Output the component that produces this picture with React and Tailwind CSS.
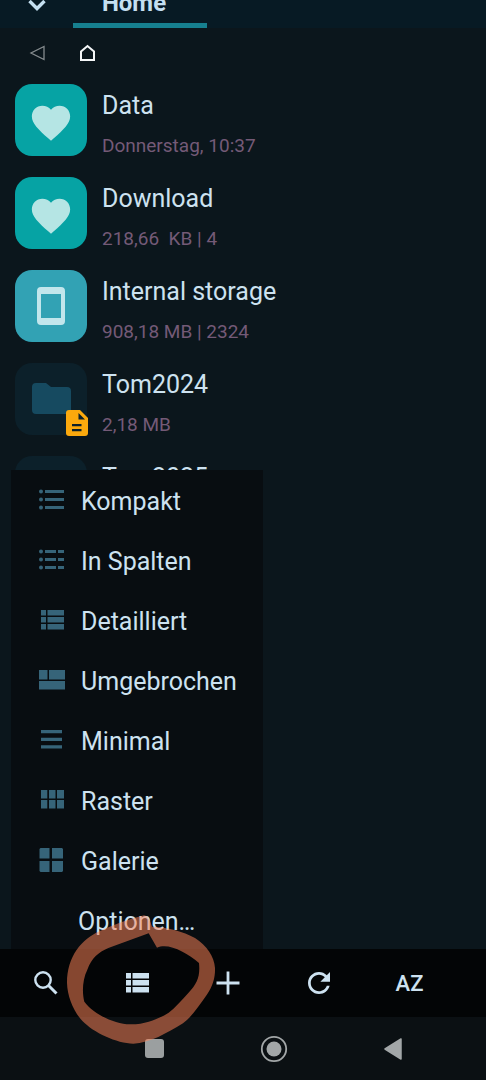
const entries = [
    { name: "Data", info: "Donnerstag, 10:37", type: "heart" },
    { name: "Download", info: "218,66  KB | 4", type: "heart" },
    { name: "Internal storage", info: "908,18 MB | 2324", type: "phone" },
    { name: "Tom2024", info: "2,18 MB", type: "folder", badge: true },
    { name: "Tom2025", info: "", type: "folder" },
];

const tileColors = {
    heart: "bg-[#06a3a4]",
    phone: "bg-[#32a2b4]",
    folder: "bg-[#0c202a]",
};

const tileIcons = {
    heart: (
        <svg viewBox="0 -1.500 24 24" className="size-[46px] fill-[#b5e5e4]">
            <path d="M12 21.350l-1.450-1.320C5.400 15.360 2 12.280 2 8.500 2 5.420 4.420 3 7.500 3c1.740 0 3.410.81 4.500 2.090C13.090 3.810 14.760 3 16.500 3 19.580 3 22 5.420 22 8.500c0 3.780-3.400 6.860-8.550 11.540z" />
        </svg>
    ),
    phone: (
        <svg viewBox="0 0 28 38" className="h-[38px] w-[28px]">
            <path fillRule="evenodd" fill="#c2e6ec" d="M4 0H24Q28 0 28 4V34Q28 38 24 38H4Q0 38 0 34V4Q0 0 4 0ZM4 7V31H24V7Z" />
        </svg>
    ),
    folder: (
        <svg viewBox="0 0 40 32" className="h-[32px] w-[40px] fill-[#164a60]">
            <path d="M5 0H15L20 4H36Q40 4 40 8V27Q40 31 36 31H5Q1 31 1 27V4Q1 0 5 0Z" />
        </svg>
    ),
};

const viewModes = [
    {
        label: "Kompakt",
        d: "M7 4H26V7H7ZM7 12H26V15H7ZM7 20H26V23H7ZM1 5.5a2 2 0 1 0 4 0a2 2 0 1 0-4 0ZM1 13.5a2 2 0 1 0 4 0a2 2 0 1 0-4 0ZM1 21.5a2 2 0 1 0 4 0a2 2 0 1 0-4 0Z",
    },
    {
        label: "In Spalten",
        d: "M7 4H18V7H7ZM20 4H26V7H20ZM7 12H18V15H7ZM20 12H26V15H20ZM7 20H18V23H7ZM20 20H26V23H20ZM1 5.5a2 2 0 1 0 4 0a2 2 0 1 0-4 0ZM1 13.5a2 2 0 1 0 4 0a2 2 0 1 0-4 0ZM1 21.5a2 2 0 1 0 4 0a2 2 0 1 0-4 0Z",
    },
    {
        label: "Detailliert",
        d: "M3 4H8V9.5H3ZM9.5 4H26V9.5H9.5ZM3 11H8V16.5H3ZM9.5 11H26V16.5H9.5ZM3 18H8V23.5H3ZM9.5 18H26V23.5H9.5Z",
    },
    { label: "Umgebrochen", d: "M1 4H9.5V13.5H1ZM11 4H27V13.5H11ZM1 15H27V23.5H1Z" },
    { label: "Minimal", d: "M3 4H24V7.3H3ZM3 11.7H24V15H3ZM3 19.3H24V22.6H3Z" },
    {
        label: "Raster",
        d: "M3 4H9.3V12.5H3ZM11 4H17.5V12.5H11ZM19 4H26V12.5H19ZM3 14H9.3V22.5H3ZM11 14H17.5V22.5H11ZM19 14H26V22.5H19Z",
    },
    {
        label: "Galerie",
        d: "M2.5 2H11.5V12.5H1.5V3ZM14 2H24L25 3V12.5H14ZM1.5 15H11.5V26H2.5L1.5 25ZM14 15H25V25L24 26H14Z",
    },
];

const Header = () => {
    return (
        <header className="flex h-7 shrink-0 items-end overflow-hidden bg-[#071a24]">
            <button aria-label="Mehr" className="flex w-[73px] justify-center pb-[17px]">
                <svg viewBox="0 0 18 12" className="h-3 w-[18px]">
                    <path d="M1.500 2L9 9.500L16.500 2" fill="none" stroke="#c4dff0" strokeWidth="3.400" />
                </svg>
            </button>
            <button className="w-[134px] border-b-[5px] border-[#16808f] pr-3 pb-1 text-2xl leading-8 font-bold text-[#c4dff0]">
                Home
            </button>
        </header>
    );
};

const Breadcrumb = () => {
    return (
        <nav className="flex h-14 shrink-0 items-center gap-[33px] pb-1.5 pl-[29px]">
            <button aria-label="Zurück">
                <svg viewBox="0 0 17 18" className="h-[18px] w-[17px]">
                    <path d="M15 2.500V15.500L2 9Z" fill="none" stroke="#858b8e" strokeWidth="1.300" />
                </svg>
            </button>
            <button aria-label="Home">
                <svg viewBox="0 0 17 18" className="h-[18px] w-[17px]">
                    <path d="M2 7.500L8.500 2L15 7.500V16H2Z" fill="none" stroke="#f5f7f8" strokeWidth="2" />
                </svg>
            </button>
        </nav>
    );
};

const Entry = ({ entry }) => {
    return (
        <li className="flex gap-[15px] pl-[15px]">
            <div className={`relative flex size-[72px] shrink-0 items-center justify-center rounded-[17px] ${tileColors[entry.type]}`}>
                {tileIcons[entry.type]}
                {entry.badge && (
                    <svg viewBox="0 0 22 26" className="absolute -right-px -bottom-px h-[26px] w-[22px]">
                        <path d="M3 0H14L22 8V23Q22 26 19 26H3Q0 26 0 23V3Q0 0 3 0Z" fill="#fba90d" />
                        <path d="M12.500 3V9.500H19ZM6 14H15.500V16.300H6ZM6 19H15.500V21.300H6Z" fill="#0c202a" />
                    </svg>
                )}
            </div>
            <div className="h-[93px] whitespace-pre">
                <div className="text-[25px] leading-[44px] text-[#cde2f0]">{entry.name}</div>
                <div className="text-[19px] leading-9 text-[#745a77]">{entry.info}</div>
            </div>
        </li>
    );
};

const ViewMenu = () => {
    return (
        <div role="menu" className="absolute bottom-0 left-[11px] w-[252px] bg-[#080d11]">
            {viewModes.map((mode) => (
                <button key={mode.label} role="menuitem" className="flex h-[60px] w-full items-center gap-[15px] pl-[27px] text-left">
                    <svg viewBox="0 0 28 28" className="size-7 shrink-0 fill-[#366479]">
                        <path d={mode.d} />
                    </svg>
                    <span className="pt-1 text-[25px] leading-8 text-[#cde2f0]">{mode.label}</span>
                </button>
            ))}
            <button role="menuitem" className="flex h-[59px] w-full items-center pt-1 pl-[67px] text-[25px] leading-8 text-[#cde2f0]">
                Optionen…
            </button>
        </div>
    );
};

const Toolbar = () => {
    return (
        <div className="relative grid h-[68px] shrink-0 grid-cols-5 bg-[#030506] pr-[31px] text-[#cde2f0]">
            <button aria-label="Suchen" className="flex items-center justify-center">
                <svg viewBox="0 0 24 24" className="size-6">
                    <circle cx="9" cy="9" r="7.700" fill="none" stroke="currentColor" strokeWidth="2.400" />
                    <path d="M14.500 14.500L22.500 22.500" stroke="currentColor" strokeWidth="3" />
                </svg>
            </button>
            <button aria-label="Ansicht" className="flex items-center justify-center">
                <svg viewBox="0 0 24 20" className="h-5 w-6 fill-current">
                    <path d="M1 0H6V5.500H1ZM7.500 0H24V5.500H7.500ZM1 7H6V12.500H1ZM7.500 7H24V12.500H7.500ZM1 14H6V19.500H1ZM7.500 14H24V19.500H7.500Z" />
                </svg>
            </button>
            <button aria-label="Neu" className="flex items-center justify-center">
                <svg viewBox="0 0 24 24" className="size-6">
                    <path d="M12 0.500V23.500M0.500 12H23.500" stroke="currentColor" strokeWidth="2.800" />
                </svg>
            </button>
            <button aria-label="Aktualisieren" className="flex items-center justify-center">
                <svg viewBox="4 4 16 16" className="size-[22px] fill-current">
                    <path d="M17.650 6.350C16.200 4.900 14.210 4 12 4c-4.420 0-7.990 3.580-7.990 8s3.570 8 7.990 8c3.730 0 6.840-2.550 7.730-6h-2.080c-.82 2.330-3.040 4-5.650 4-3.310 0-6-2.690-6-6s2.690-6 6-6c1.660 0 3.140.69 4.220 1.780L13 11h7V4z" />
                </svg>
            </button>
            <button className="text-[22px] font-medium">AZ</button>
            {/* hand drawn marker around the view button */}
            <svg viewBox="195 100 456 396" className="pointer-events-none absolute -top-9 left-[65px] z-20 h-[132px] w-[152px]">
                <path
                    fill="#ff8558"
                    fillOpacity="0.520"
                    fillRule="evenodd"
                    d="M432 107C385 119 340 136 300 154C245 178 201 230 201 310C202 350 220 395 248 425C280 458 350 492 400 492C450 491 500 460 549 431C580 407 595 380 620 346C640 318 646 290 645 265C643 230 620 198 585 175C550 155 500 142 456 141Q446 108 432 107ZM446 161L471 204C505 188 560 218 597 250C601 290 592 312 565 340C545 362 525 385 506 399C480 415 440 435 390 434C345 433 285 407 253 366C246 340 247 300 262 270C275 235 295 218 325 205Z"
                />
            </svg>
        </div>
    );
};

const SystemBar = () => {
    return (
        <div className="grid h-[63px] shrink-0 grid-cols-3 bg-[#0b1013] pr-[33px] pl-[95px]">
            <button aria-label="Letzte Apps" className="flex items-center justify-center">
                <span className="size-[19px] rounded-[3px] bg-[#9b9fa0]" />
            </button>
            <button aria-label="Startseite" className="flex items-center justify-center">
                <svg viewBox="0 0 28 28" className="size-7">
                    <circle cx="14" cy="14" r="12.200" fill="none" stroke="#a3a7a8" strokeWidth="1.800" />
                    <circle cx="14" cy="14" r="7.500" fill="#a3a7a8" />
                </svg>
            </button>
            <button aria-label="Zurück" className="flex items-center justify-center">
                <svg viewBox="0 0 18 22" className="h-[22px] w-[18px]">
                    <path d="M17 1V21L1 11Z" fill="#a3a7a8" stroke="#a3a7a8" strokeLinejoin="round" strokeWidth="1.500" />
                </svg>
            </button>
        </div>
    );
};

const App = () => {
    return (
        <div className="flex h-screen flex-col overflow-hidden bg-[#0b161c] font-['Roboto',sans-serif]">
            <Header />
            <main className="relative flex min-h-0 flex-1 flex-col overflow-hidden">
                <Breadcrumb />
                <ul>
                    {entries.map((entry) => (
                        <Entry key={entry.name} entry={entry} />
                    ))}
                </ul>
                <ViewMenu />
            </main>
            <Toolbar />
            <SystemBar />
        </div>
    );
};

export default App;
